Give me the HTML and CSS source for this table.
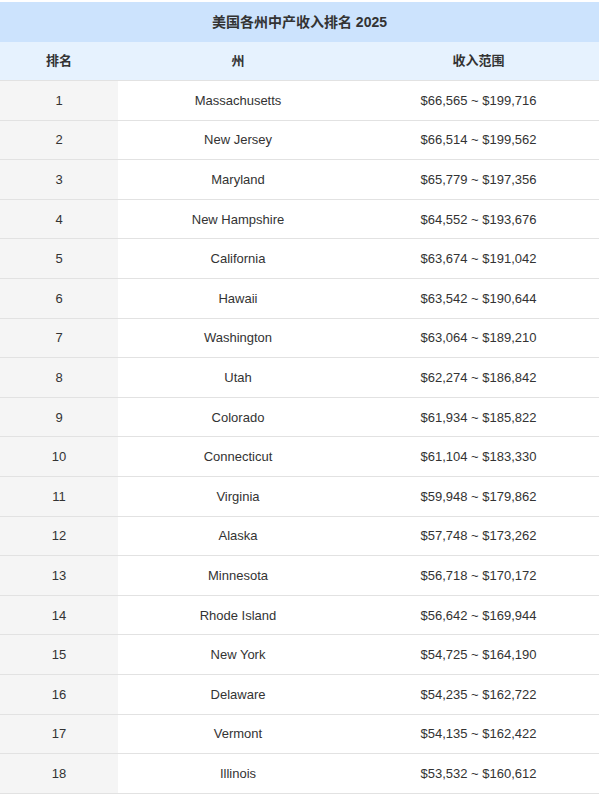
FILE: index.html
```html
<!DOCTYPE html>
<html lang="zh">
<head>
<meta charset="utf-8">
<link rel="stylesheet" href="styles.css">
</head>
<body>
<div class="wrap">
<table class="rank">
<colgroup><col class="c1"><col class="c2"><col class="c3"></colgroup>
<thead>
<tr class="title-row"><th colspan="3">美国各州中产收入排名 2025</th></tr>
<tr class="head-row"><th>排名</th><th>州</th><th>收入范围</th></tr>
</thead>
<tbody>
<tr><td class="n">1</td><td>Massachusetts</td><td>$66,565 ~ $199,716</td></tr>
<tr><td class="n">2</td><td>New Jersey</td><td>$66,514 ~ $199,562</td></tr>
<tr><td class="n">3</td><td>Maryland</td><td>$65,779 ~ $197,356</td></tr>
<tr><td class="n">4</td><td>New Hampshire</td><td>$64,552 ~ $193,676</td></tr>
<tr><td class="n">5</td><td>California</td><td>$63,674 ~ $191,042</td></tr>
<tr><td class="n">6</td><td>Hawaii</td><td>$63,542 ~ $190,644</td></tr>
<tr><td class="n">7</td><td>Washington</td><td>$63,064 ~ $189,210</td></tr>
<tr><td class="n">8</td><td>Utah</td><td>$62,274 ~ $186,842</td></tr>
<tr><td class="n">9</td><td>Colorado</td><td>$61,934 ~ $185,822</td></tr>
<tr><td class="n">10</td><td>Connecticut</td><td>$61,104 ~ $183,330</td></tr>
<tr><td class="n">11</td><td>Virginia</td><td>$59,948 ~ $179,862</td></tr>
<tr><td class="n">12</td><td>Alaska</td><td>$57,748 ~ $173,262</td></tr>
<tr><td class="n">13</td><td>Minnesota</td><td>$56,718 ~ $170,172</td></tr>
<tr><td class="n">14</td><td>Rhode Island</td><td>$56,642 ~ $169,944</td></tr>
<tr><td class="n">15</td><td>New York</td><td>$54,725 ~ $164,190</td></tr>
<tr><td class="n">16</td><td>Delaware</td><td>$54,235 ~ $162,722</td></tr>
<tr><td class="n">17</td><td>Vermont</td><td>$54,135 ~ $162,422</td></tr>
<tr><td class="n">18</td><td>Illinois</td><td>$53,532 ~ $160,612</td></tr>
</tbody>
</table>
</div>
</body>
</html>
```
FILE: styles.css
```css
html, body {
  margin: 0;
  padding: 0;
  background: #fff;
}
.wrap {
  padding-top: 2px;
}
.rank {
  width: 599px;
  border-collapse: collapse;
  table-layout: fixed;
  font-family: "Liberation Sans", Arial, "Noto Sans CJK SC", sans-serif;
  font-size: 13px;
  color: #333;
}
.c1 { width: 118px; }
.c2 { width: 240px; }
.c3 { width: 241px; }
.rank th, .rank td {
  text-align: center;
  padding: 1px 0 0;
  height: 37.6px;
  line-height: 16px;
  border-bottom: 1px solid #e2e2e2;
}
.title-row th {
  background: #cce3fd;
  font-size: 14px;
  font-weight: bold;
  padding: 0;
  height: 40px;
  border-bottom: none;
}
.head-row th {
  background: #e6f2fe;
  font-weight: bold;
  padding: 0;
  height: 38px;
}
.rank td.n {
  background: #f5f5f5;
}
```
